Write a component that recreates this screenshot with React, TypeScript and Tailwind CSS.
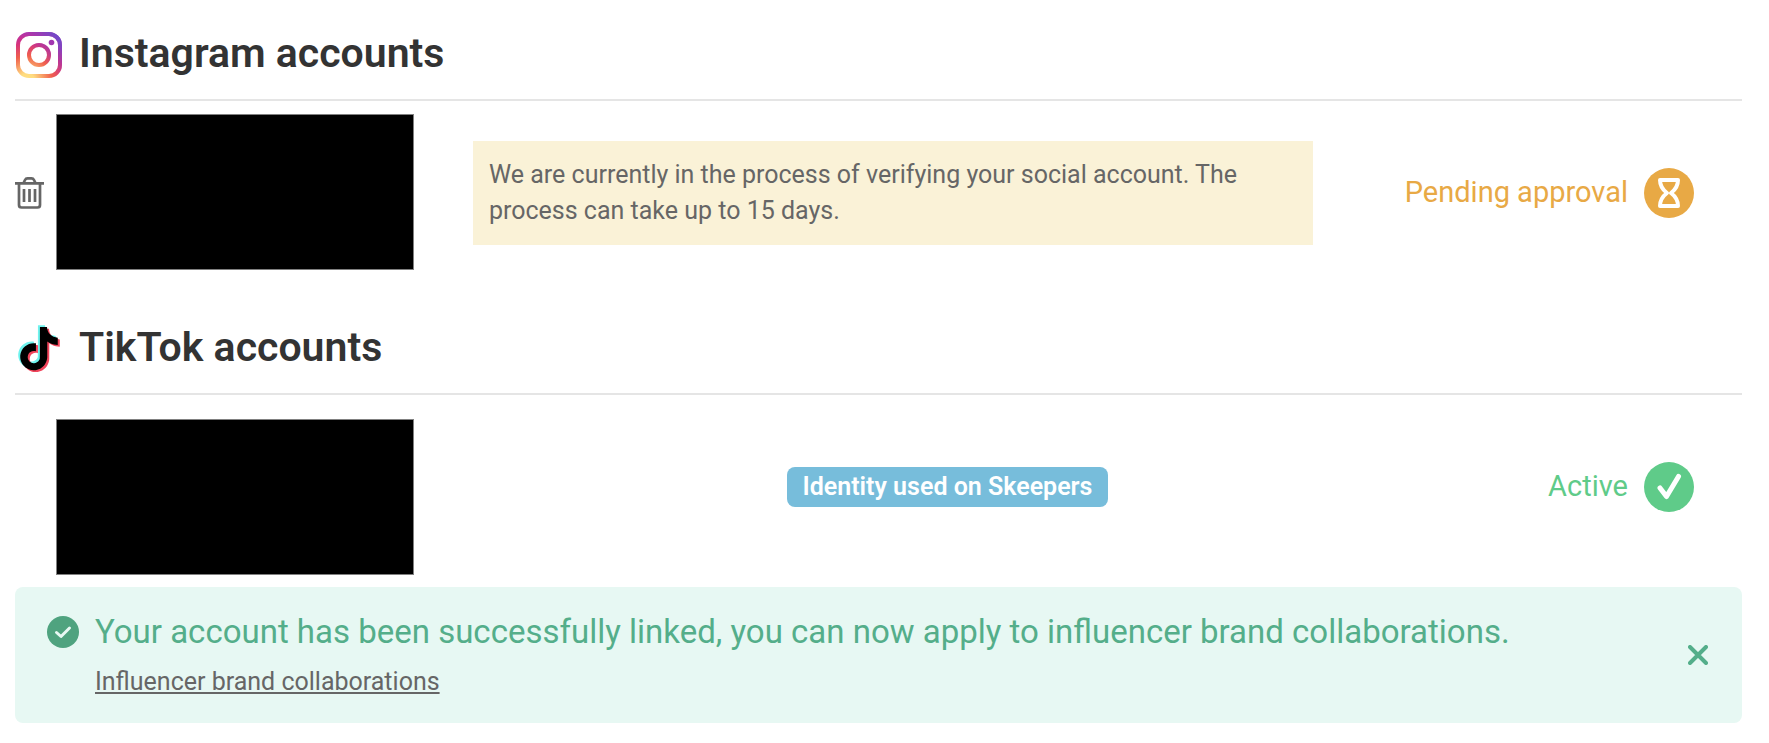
import type { ReactNode } from "react";

const TIKTOK_NOTE =
  "M12.525.02c1.31-.02 2.61-.01 3.91-.02.08 1.53.63 3.09 1.75 4.17 1.12 1.11 2.7 1.62 4.24 1.79v4.03c-1.44-.05-2.89-.35-4.2-.97-.57-.26-1.1-.59-1.62-.93-.01 2.92.01 5.84-.02 8.75-.08 1.4-.54 2.79-1.35 3.94-1.31 1.92-3.58 3.17-5.91 3.21-1.43.08-2.86-.31-4.08-1.03-2.02-1.19-3.44-3.37-3.65-5.71-.02-.5-.03-1-.01-1.49.18-1.9 1.12-3.72 2.58-4.96 1.66-1.44 3.98-2.13 6.15-1.72.02 1.48-.04 2.96-.04 4.44-.99-.32-2.15-.23-3.02.37-.63.41-1.11 1.04-1.36 1.75-.21.51-.15 1.07-.14 1.61.24 1.64 1.82 3.02 3.5 2.87 1.12-.01 2.19-.66 2.77-1.61.19-.33.4-.67.41-1.06.1-1.79.06-3.57.07-5.36.01-4.03-.01-8.05.02-12.07z";

function InstagramLogo() {
  return (
    <svg className="size-12 shrink-0" viewBox="0 0 48 48" fill="none" aria-hidden="true">
      <defs>
        <radialGradient id="ig-warm" gradientUnits="userSpaceOnUse" cx="12" cy="50" r="48">
          <stop offset="0" stopColor="#ffe185" />
          <stop offset="0.16" stopColor="#ffdc80" />
          <stop offset="0.52" stopColor="#f0604d" />
          <stop offset="0.8" stopColor="#d5317f" />
          <stop offset="1" stopColor="#b932a4" />
        </radialGradient>
        <linearGradient id="ig-cool" gradientUnits="userSpaceOnUse" x1="22" y1="24" x2="44" y2="2">
          <stop offset="0" stopColor="#9b36b7" stopOpacity="0" />
          <stop offset="1" stopColor="#6150d0" />
        </linearGradient>
      </defs>
      {["url(#ig-warm)", "url(#ig-cool)"].map((paint) => (
        <g key={paint} stroke={paint} strokeWidth="4">
          <rect x="3" y="3" width="42" height="42" rx="11" />
          <circle cx="24" cy="24" r="10" />
        </g>
      ))}
      <circle cx="36.5" cy="11.5" r="2.8" fill="#a136b0" />
    </svg>
  );
}

function TikTokLogo() {
  return (
    <svg className="size-12 shrink-0" viewBox="0 0 48 48" aria-hidden="true">
      <path d={TIKTOK_NOTE} fill="#6ff3ee" transform="translate(0.4 0.3) scale(1.8)" />
      <path d={TIKTOK_NOTE} fill="#f1445b" transform="translate(4.4 3.800) scale(1.8)" />
      <path d={TIKTOK_NOTE} fill="#000" transform="translate(2.4 2) scale(1.8)" />
    </svg>
  );
}

function TrashIcon() {
  return (
    <svg className="h-8 w-[29px]" viewBox="0 0 29 32" fill="none" stroke="currentColor" strokeWidth="2.7" aria-hidden="true">
      <path d="M0 6.300h29M8.500 6l1.500-3q.8-1.600 2.500-1.600h4q1.700 0 2.500 1.600l1.500 3M4 7v21q0 2.500 2.500 2.500h16q2.500 0 2.500-2.500V7" />
      <path d="M9 12v13M14.500 12v13M20 12v13" />
    </svg>
  );
}

function HourglassIcon() {
  return (
    <svg className="size-[50px] shrink-0" viewBox="0 0 50 50" fill="none" aria-hidden="true">
      <circle cx="25" cy="25" r="25" fill="#e8a945" />
      <path
        d="M16 12h18c0 6-3 10-7 13 4 3 7 7 7 13H16c0-6 3-10 7-13-4-3-7-7-7-13Z"
        stroke="#fff"
        strokeWidth="4"
        strokeLinejoin="round"
      />
    </svg>
  );
}

function ActiveIcon() {
  return (
    <svg className="size-[50px] shrink-0" viewBox="0 0 50 50" fill="none" aria-hidden="true">
      <circle cx="25" cy="25" r="25" fill="#5fcb89" />
      <path d="m16 26 6.500 8.500L34.500 14.500" stroke="#fff" strokeWidth="5" strokeLinecap="round" strokeLinejoin="round" />
    </svg>
  );
}

interface AccountSectionProps {
  title: string;
  logo: ReactNode;
  action?: ReactNode;
  identityClass: string;
  status: ReactNode;
  children: ReactNode;
}

function AccountSection({ title, logo, action, identityClass, status, children }: AccountSectionProps) {
  return (
    <section>
      <header className="flex items-start gap-4 border-b-2 border-[#e5e5e5] pb-5">
        {logo}
        <h2 className="text-[41px] leading-11 font-semibold text-[#333]">{title}</h2>
      </header>
      <div className="flex h-[184px] items-center">
        <div className="flex w-[458px] shrink-0 items-center self-stretch">
          <div className="w-[41px]">{action}</div>
          <div className={`h-[156px] w-[358px] self-start border border-[#808080] bg-black ${identityClass}`} />
        </div>
        <div className="min-w-0 flex-1">{children}</div>
        <div className="flex w-80 shrink-0 items-center justify-end gap-4 pr-12 text-[29px] whitespace-nowrap">
          {status}
        </div>
      </div>
    </section>
  );
}

export default function App() {
  return (
    <main className="flex flex-col pt-[31px] pr-[27px] pl-[15px] font-['Roboto',sans-serif]">
      <AccountSection
        title="Instagram accounts"
        logo={<InstagramLogo />}
        identityClass="mt-[13px]"
        action={
          <button type="button" aria-label="Delete account" className="block text-[#666]">
            <TrashIcon />
          </button>
        }
        status={
          <>
            <span className="text-[#e8a945]">Pending approval</span>
            <HourglassIcon />
          </>
        }
      >
        <p className="mr-[109px] bg-[#faf2d7] px-4 py-4 text-[25px] leading-9 text-[#666]">
          We are currently in the process of verifying your social account. The process can take up to 15 days.
        </p>
      </AccountSection>

      <div className="mt-10">
        <AccountSection
          title="TikTok accounts"
          logo={<TikTokLogo />}
          identityClass="mt-6"
          status={
            <>
              <span className="text-[#5fcb89]">Active</span>
              <ActiveIcon />
            </>
          }
        >
          <div className="flex justify-center">
            <span className="rounded-lg bg-[#77bddb] px-4 text-[25px] leading-10 font-semibold text-white">
              Identity used on Skeepers
            </span>
          </div>
        </AccountSection>
      </div>

      <div role="status" className="mt-2 flex h-34 items-center rounded-lg bg-[#e7f8f3] pr-[34px] pl-8">
        <div className="flex flex-1 items-start gap-4">
          <svg className="mt-1 size-8 shrink-0" viewBox="0 0 32 32" fill="none" aria-hidden="true">
            <circle cx="16" cy="16" r="16" fill="#4fa37f" />
            <path d="m9.500 16.500 4.500 4 8.500-8.500" stroke="#e7f8f3" strokeWidth="3" strokeLinecap="round" strokeLinejoin="round" />
          </svg>
          <div className="flex flex-col items-start gap-3.5">
            <p className="text-[33px] leading-10 text-[#54ae8a]">
              Your account has been successfully linked, you can now apply to influencer brand collaborations.
            </p>
            <a href="#collaborations" className="text-[25px] leading-8 text-[#666] underline">
              Influencer brand collaborations
            </a>
          </div>
        </div>
        <button type="button" aria-label="Dismiss" className="text-[#54ae8a]">
          <svg className="size-5" viewBox="0 0 20 20" fill="none" stroke="currentColor" strokeWidth="4" strokeLinecap="round" aria-hidden="true">
            <path d="m2 2 16 16M18 2 2 18" />
          </svg>
        </button>
      </div>
    </main>
  );
}
